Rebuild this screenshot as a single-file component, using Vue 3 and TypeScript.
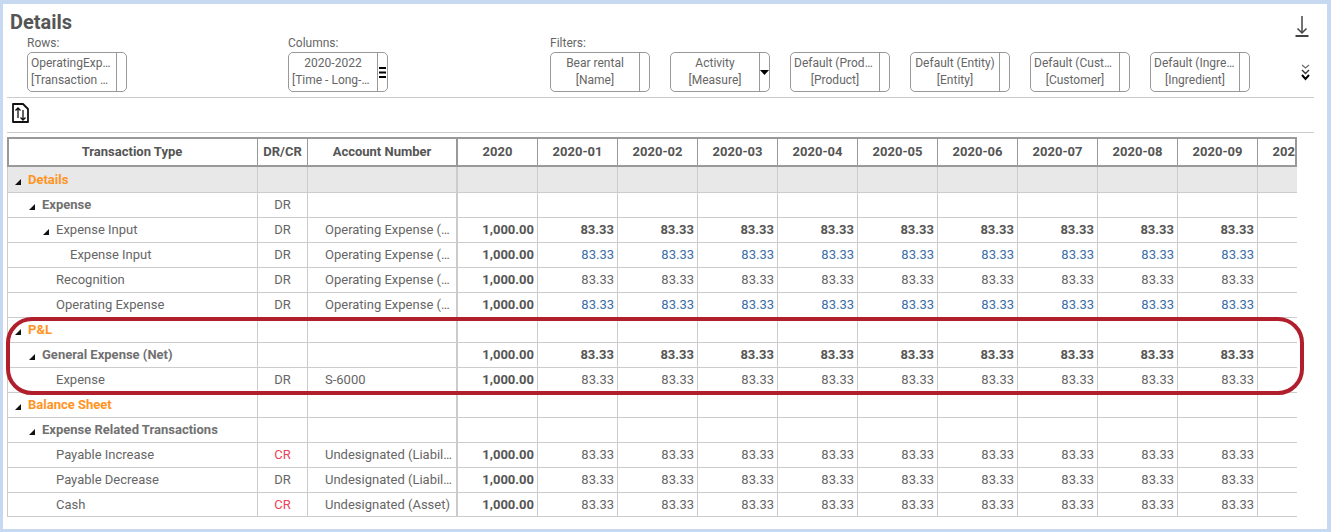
<script setup lang="ts">
interface Chip {
  name: string;
  dim: string;
  icon?: 'menu' | 'drop';
}

interface Row {
  label: string;
  level: number;
  caret?: boolean;
  kind?: 'section' | 'group' | 'total';
  shaded?: boolean;
  side?: string;
  account?: string;
  values?: 'bold' | 'plain' | 'input';
}

const rowChips: Chip[] = [{ name: 'OperatingExpense', dim: '[Transaction Type]' }];
const columnChips: Chip[] = [{ name: '2020-2022', dim: '[Time - Long-Term]', icon: 'menu' }];
const filterChips: Chip[] = [
  { name: 'Bear rental', dim: '[Name]' },
  { name: 'Activity', dim: '[Measure]', icon: 'drop' },
  { name: 'Default (Product)', dim: '[Product]' },
  { name: 'Default (Entity)', dim: '[Entity]' },
  { name: 'Default (Customer)', dim: '[Customer]' },
  { name: 'Default (Ingredient)', dim: '[Ingredient]' },
];

const periods = [
  '2020-01', '2020-02', '2020-03', '2020-04', '2020-05',
  '2020-06', '2020-07', '2020-08', '2020-09', '2020-10',
];

const opex = 'Operating Expense (Accrual)';
const liab = 'Undesignated (Liability)';

const rows: Row[] = [
  { label: 'Details', level: 0, caret: true, kind: 'section', shaded: true },
  { label: 'Expense', level: 1, caret: true, kind: 'group', side: 'DR' },
  { label: 'Expense Input', level: 2, caret: true, side: 'DR', account: opex, values: 'bold' },
  { label: 'Expense Input', level: 3, side: 'DR', account: opex, values: 'input' },
  { label: 'Recognition', level: 2, side: 'DR', account: opex, values: 'plain' },
  { label: 'Operating Expense', level: 2, side: 'DR', account: opex, values: 'input' },
  { label: 'P&L', level: 0, caret: true, kind: 'section' },
  { label: 'General Expense (Net)', level: 1, caret: true, kind: 'group', values: 'bold' },
  { label: 'Expense', level: 2, side: 'DR', account: 'S-6000', values: 'plain' },
  { label: 'Balance Sheet', level: 0, caret: true, kind: 'section' },
  { label: 'Expense Related Transactions', level: 1, caret: true, kind: 'group' },
  { label: 'Payable Increase', level: 2, side: 'CR', account: liab, values: 'plain' },
  { label: 'Payable Decrease', level: 2, side: 'DR', account: liab, values: 'plain' },
  { label: 'Cash', level: 2, side: 'CR', account: 'Undesignated (Asset)', values: 'plain' },
];

// first column indent follows the tree level
function indent(row: Row) {
  return { paddingLeft: `${row.level * 14 + (row.caret ? 6 : 20)}px` };
}
</script>

<template>
  <div class="panel">
    <div class="title-row">
      <h1 class="title">Details</h1>
      <svg class="download" width="14" height="21" viewBox="0 0 14 21" fill="none" stroke="#444" stroke-width="1.5">
        <line x1="7" y1="0" x2="7" y2="17"></line>
        <polyline points="2.5,12.5 7,17 11.5,12.5"></polyline>
        <line x1="0.5" y1="20" x2="13.5" y2="20" stroke-width="2"></line>
      </svg>
    </div>

    <div class="drop-zones">
      <div class="zone zone-rows">
        <div class="zone-label">Rows:</div>
        <div class="chips">
          <div v-for="chip in rowChips" :key="chip.dim" class="chip">
            <div class="chip-text"><span>{{ chip.name }}</span><span>{{ chip.dim }}</span></div>
            <div class="chip-side"></div>
          </div>
        </div>
      </div>
      <div class="zone zone-columns">
        <div class="zone-label">Columns:</div>
        <div class="chips">
          <div v-for="chip in columnChips" :key="chip.dim" class="chip">
            <div class="chip-text"><span>{{ chip.name }}</span><span>{{ chip.dim }}</span></div>
            <div class="chip-side">
              <svg width="9" height="11" viewBox="0 0 9 11" fill="#000">
                <rect x="1" y="0" width="7" height="2"></rect>
                <rect x="1" y="4.5" width="7" height="2"></rect>
                <rect x="1" y="9" width="7" height="2"></rect>
              </svg>
            </div>
          </div>
        </div>
      </div>
      <div class="zone">
        <div class="zone-label">Filters:</div>
        <div class="chips">
          <div v-for="chip in filterChips" :key="chip.dim" class="chip">
            <div class="chip-text"><span>{{ chip.name }}</span><span>{{ chip.dim }}</span></div>
            <div class="chip-side">
              <svg v-if="chip.icon === 'drop'" width="9" height="5" viewBox="0 0 9 5" fill="#000">
                <polygon points="0,0 9,0 4.5,5"></polygon>
              </svg>
            </div>
          </div>
        </div>
      </div>
      <svg class="collapse" width="9" height="17" viewBox="0 0 9 17" fill="none">
        <polyline points="1,1 4.5,4 8,1" stroke="#666" stroke-width="1.1"></polyline>
        <polyline points="1,6 4.5,9.5 8,6" stroke="#333" stroke-width="1.4"></polyline>
        <polyline points="1,11 4.5,15 8,11" stroke="#000" stroke-width="2"></polyline>
      </svg>
    </div>

    <div class="toolbar">
      <svg width="17" height="20" viewBox="0 0 17 20" fill="none" stroke="#111">
        <path d="M1 1 H11 L16 6 V19 H1 Z" stroke-width="1.8" stroke-linejoin="round"></path>
        <path d="M6 15 V5 M3.5 7.5 L6 5 L8.5 7.5" stroke-width="1.3"></path>
        <path d="M11 7 V17 M8.5 14.5 L11 17 L13.5 14.5" stroke-width="1.3"></path>
      </svg>
    </div>

    <div class="grid-wrap">
      <table class="grid">
        <colgroup>
          <col class="col-type" />
          <col class="col-side" />
          <col class="col-account" />
          <col v-for="n in 11" :key="n" class="col-num" />
        </colgroup>
        <thead>
          <tr>
            <th>Transaction Type</th>
            <th>DR/CR</th>
            <th class="split">Account Number</th>
            <th>2020</th>
            <th v-for="p in periods" :key="p">{{ p }}</th>
          </tr>
        </thead>
        <tbody>
          <tr v-for="(row, i) in rows" :key="i" :class="{ shaded: row.shaded }">
            <td class="type" :class="row.kind" :style="indent(row)">
              <svg v-if="row.caret" class="caret" width="6" height="6" viewBox="0 0 6 6" fill="#111">
                <polygon points="6,0 6,6 0,6"></polygon>
              </svg>{{ row.label }}
            </td>
            <td class="side" :class="{ credit: row.side === 'CR' }">{{ row.side }}</td>
            <td class="split account">{{ row.account }}</td>
            <td class="num year">{{ row.values ? '1,000.00' : '' }}</td>
            <td v-for="p in periods" :key="p" class="num" :class="row.values">
              {{ row.values && p !== '2020-10' ? '83.33' : '' }}
            </td>
          </tr>
        </tbody>
      </table>
      <div class="head-frame"></div>
    </div>

    <div class="highlight"></div>
  </div>
</template>

<style scoped>
.panel {
  position: relative;
  box-sizing: border-box;
  width: 1324px;
  height: 525px;
  margin: 4px 0 0 3px;
  background: #fff;
  font-family: Roboto, "Liberation Sans", sans-serif;
  font-size: 12px;
  color: #666;
  overflow: hidden;
}

.title-row {
  display: flex;
  justify-content: space-between;
  height: 33px;
  padding-right: 18px;
  padding-left: 7px;
}

.title {
  margin: 7px 0 0;
  font-size: 20px;
  line-height: 22px;
  font-weight: 700;
  color: #555;
}

.download {
  margin-top: 12px;
}

.drop-zones {
  display: flex;
  width: 1307px;
  margin-left: 4px;
  padding-left: 20px;
  padding-bottom: 5px;
  box-sizing: border-box;
  border-bottom: 1px solid #ccc;
  position: relative;
}

.zone-rows {
  width: 261px;
}

.zone-columns {
  width: 262px;
}

.zone-label {
  height: 15px;
  line-height: 13px;
}

.chips {
  display: flex;
  gap: 20px;
}

.chip {
  display: flex;
  box-sizing: border-box;
  width: 100px;
  height: 40px;
  border: 1px solid #999;
  border-radius: 5px;
}

.chip-text {
  width: 88px;
  padding: 2px 3px;
  box-sizing: border-box;
  display: flex;
  flex-direction: column;
  text-align: center;
}

.chip-text span {
  display: block;
  line-height: 17px;
  white-space: nowrap;
  overflow: hidden;
  text-overflow: ellipsis;
}

.chip-side {
  flex: 1;
  display: flex;
  align-items: center;
  justify-content: center;
  border-left: 1px solid #999;
}

.collapse {
  margin-left: 51px;
  margin-top: 27px;
}

.toolbar {
  box-sizing: border-box;
  width: 1307px;
  height: 35px;
  margin-left: 4px;
  padding: 5px 0 0 5px;
  border-bottom: 1px solid #ccc;
}

.grid-wrap {
  position: relative;
  width: 1290px;
  margin: 4px 0 0 4px;
  overflow: hidden;
}

.grid {
  table-layout: fixed;
  width: 1331px;
  border-collapse: separate;
  border-spacing: 0;
  font-size: 13px;
}

.col-type {
  width: 251px;
}

.col-side {
  width: 50px;
}

.col-account {
  width: 150px;
}

.col-num {
  width: 80px;
}

th {
  box-sizing: border-box;
  height: 30px;
  padding: 0 0 2px;
  border-right: 1px solid #999;
  font-weight: 700;
  color: #555;
  text-align: center;
}

th.split {
  border-right-width: 2px;
  border-right-color: #999;
}

td {
  box-sizing: border-box;
  height: 25px;
  padding: 0 0 2px;
  border-right: 1px solid #ccc;
  border-bottom: 1px solid #ccc;
  white-space: nowrap;
  overflow: hidden;
}

td.split {
  border-right-width: 2px;
}

tbody tr:first-child td {
  height: 26px;
  padding-bottom: 0;
}

tbody tr:last-child td {
  height: 24px;
  padding-bottom: 0;
}

.shaded td {
  background: #e8e8e8;
}

.type {
  border-left: 1px solid #ccc;
}

.caret {
  margin-right: 7px;
  margin-left: 1px;
  position: relative;
  top: 1px;
}

.section {
  font-weight: 700;
  color: #ff9422;
}

.group {
  font-weight: 700;
  color: #717171;
}

.side {
  text-align: center;
}

.credit {
  color: #e8455a;
}

.account {
  padding-left: 17px;
  padding-right: 3px;
  text-overflow: ellipsis;
}

.num {
  padding-right: 3px;
  text-align: right;
}

.year,
.num.bold {
  font-weight: 700;
  color: #555;
}

.num.input {
  color: #3a6ea5;
}

.head-frame {
  position: absolute;
  top: 0;
  left: 0;
  right: 0;
  height: 30px;
  box-sizing: border-box;
  border: 2px solid #999;
  pointer-events: none;
}

.highlight {
  position: absolute;
  left: 3px;
  top: 313px;
  width: 1298px;
  height: 78px;
  box-sizing: border-box;
  border: 4px solid #b01f2b;
  border-radius: 26px;
  pointer-events: none;
}
</style>

<style>
html,
body {
  margin: 0;
  height: 100%;
  background: #c6d9f1;
  overflow: hidden;
}
</style>
